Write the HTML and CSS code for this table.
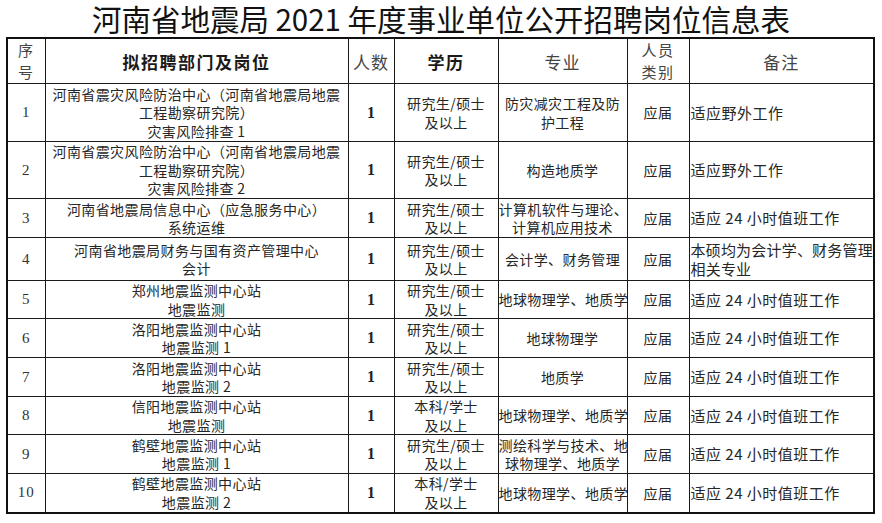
FILE: index.html
```html
<!DOCTYPE html>
<html lang="zh-CN">
<head>
<meta charset="utf-8">
<title>河南省地震局 2021 年度事业单位公开招聘岗位信息表</title>
<link rel="stylesheet" href="styles.css">
</head>
<body>
<h1 class="title">河南省地震局 2021 年度事业单位公开招聘岗位信息表</h1>
<table class="grid">
  <colgroup>
    <col class="c-no"><col class="c-dept"><col class="c-num"><col class="c-edu"><col class="c-major"><col class="c-type"><col class="c-note">
  </colgroup>
  <thead>
    <tr class="h-head">
      <th class="hd small">序<br>号</th>
      <th class="hd bold">拟招聘部门及岗位</th>
      <th class="hd">人数</th>
      <th class="hd bold">学历</th>
      <th class="hd">专业</th>
      <th class="hd small">人员<br>类别</th>
      <th class="hd">备注</th>
    </tr>
  </thead>
  <tbody>
    <tr class="h-3l">
      <td class="no">1</td>
      <td class="txt">河南省震灾风险防治中心（河南省地震局地震<br>工程勘察研究院）<br>灾害风险排查 1</td>
      <td class="num">1</td>
      <td class="txt">研究生/硕士<br>及以上</td>
      <td class="txt">防灾减灾工程及防<br>护工程</td>
      <td class="txt">应届</td>
      <td class="note">适应野外工作</td>
    </tr>
    <tr class="h-3m">
      <td class="no">2</td>
      <td class="txt">河南省震灾风险防治中心（河南省地震局地震<br>工程勘察研究院）<br>灾害风险排查 2</td>
      <td class="num">1</td>
      <td class="txt">研究生/硕士<br>及以上</td>
      <td class="txt">构造地质学</td>
      <td class="txt">应届</td>
      <td class="note">适应野外工作</td>
    </tr>
    <tr class="h-2">
      <td class="no">3</td>
      <td class="txt">河南省地震局信息中心（应急服务中心）<br>系统运维</td>
      <td class="num">1</td>
      <td class="txt">研究生/硕士<br>及以上</td>
      <td class="txt">计算机软件与理论、<br>计算机应用技术</td>
      <td class="txt">应届</td>
      <td class="note">适应 24 小时值班工作</td>
    </tr>
    <tr class="h-2b">
      <td class="no">4</td>
      <td class="txt">河南省地震局财务与国有资产管理中心<br>会计</td>
      <td class="num">1</td>
      <td class="txt">研究生/硕士<br>及以上</td>
      <td class="txt">会计学、财务管理</td>
      <td class="txt">应届</td>
      <td class="note tight">本硕均为会计学、财务管理<br>相关专业</td>
    </tr>
    <tr class="h-2s">
      <td class="no">5</td>
      <td class="txt">郑州地震监测中心站<br>地震监测</td>
      <td class="num">1</td>
      <td class="txt">研究生/硕士<br>及以上</td>
      <td class="txt">地球物理学、地质学</td>
      <td class="txt">应届</td>
      <td class="note">适应 24 小时值班工作</td>
    </tr>
    <tr class="h-2">
      <td class="no">6</td>
      <td class="txt">洛阳地震监测中心站<br>地震监测 1</td>
      <td class="num">1</td>
      <td class="txt">研究生/硕士<br>及以上</td>
      <td class="txt">地球物理学</td>
      <td class="txt">应届</td>
      <td class="note">适应 24 小时值班工作</td>
    </tr>
    <tr class="h-2">
      <td class="no">7</td>
      <td class="txt">洛阳地震监测中心站<br>地震监测 2</td>
      <td class="num">1</td>
      <td class="txt">研究生/硕士<br>及以上</td>
      <td class="txt">地质学</td>
      <td class="txt">应届</td>
      <td class="note">适应 24 小时值班工作</td>
    </tr>
    <tr class="h-2s">
      <td class="no">8</td>
      <td class="txt">信阳地震监测中心站<br>地震监测</td>
      <td class="num">1</td>
      <td class="txt">本科/学士<br>及以上</td>
      <td class="txt">地球物理学、地质学</td>
      <td class="txt">应届</td>
      <td class="note">适应 24 小时值班工作</td>
    </tr>
    <tr class="h-2">
      <td class="no">9</td>
      <td class="txt">鹤壁地震监测中心站<br>地震监测 1</td>
      <td class="num">1</td>
      <td class="txt">研究生/硕士<br>及以上</td>
      <td class="txt">测绘科学与技术、地<br>球物理学、地质学</td>
      <td class="txt">应届</td>
      <td class="note">适应 24 小时值班工作</td>
    </tr>
    <tr class="h-2">
      <td class="no">10</td>
      <td class="txt">鹤壁地震监测中心站<br>地震监测 2</td>
      <td class="num">1</td>
      <td class="txt">本科/学士<br>及以上</td>
      <td class="txt">地球物理学、地质学</td>
      <td class="txt">应届</td>
      <td class="note">适应 24 小时值班工作</td>
    </tr>
  </tbody>
</table>
</body>
</html>
```
FILE: styles.css
```css
html, body {
  margin: 0;
  padding: 0;
  background: #ffffff;
}
body {
  width: 882px;
  height: 523px;
  overflow: hidden;
  font-family: "Noto Sans CJK SC", "Noto Sans", sans-serif;
  color: #222;
}
.title {
  margin: 0;
  height: 37px;
  line-height: 36px;
  font-size: 29.5px;
  font-weight: 400;
  text-align: center;
  color: #111;
  white-space: nowrap;
}
.grid {
  margin-left: 6px;
  width: 868px;
  table-layout: fixed;
  border-collapse: collapse;
  border: 2px solid #111;
}
.c-no { width: 38px; }
.c-dept { width: 303px; }
.c-num { width: 46px; }
.c-edu { width: 104px; }
.c-major { width: 129px; }
.c-type { width: 62px; }
.c-note { width: 185px; }
.grid th, .grid td {
  border: 1px solid #1a1a1a;
  padding: 0;
  text-align: center;
  vertical-align: middle;
  white-space: nowrap;
  overflow: hidden;
}
.hd {
  font-size: 17px;
  font-weight: 400;
  line-height: 21px;
  color: #444;
  letter-spacing: 1px;
}
.hd.bold {
  font-weight: 700;
  color: #1a1a1a;
  letter-spacing: 1.5px;
}
.hd.small {
  font-size: 15px;
  line-height: 22px;
  letter-spacing: 1.5px;
}
.h-head { height: 45px; }
.h-3l { height: 58px; }
.h-3m { height: 57px; }
.h-2 { height: 39px; }
.h-2b { height: 43px; }
.h-2s { height: 38px; }
.txt {
  font-size: 14px;
  line-height: 18.5px;
  letter-spacing: 0.4px;
  color: #262626;
}
.no {
  font-family: "Liberation Serif", serif;
  font-size: 15px;
  color: #333;
  letter-spacing: 1px;
}
.num {
  font-family: "Liberation Serif", serif;
  font-size: 16px;
  font-weight: 700;
  color: #222;
}
.grid td.note {
  text-align: left;
  padding-left: 1px;
  font-size: 15px;
  line-height: 19.5px;
  letter-spacing: 0.5px;
  color: #262626;
}
.grid td.note.tight {
  letter-spacing: 0.2px;
}
```
